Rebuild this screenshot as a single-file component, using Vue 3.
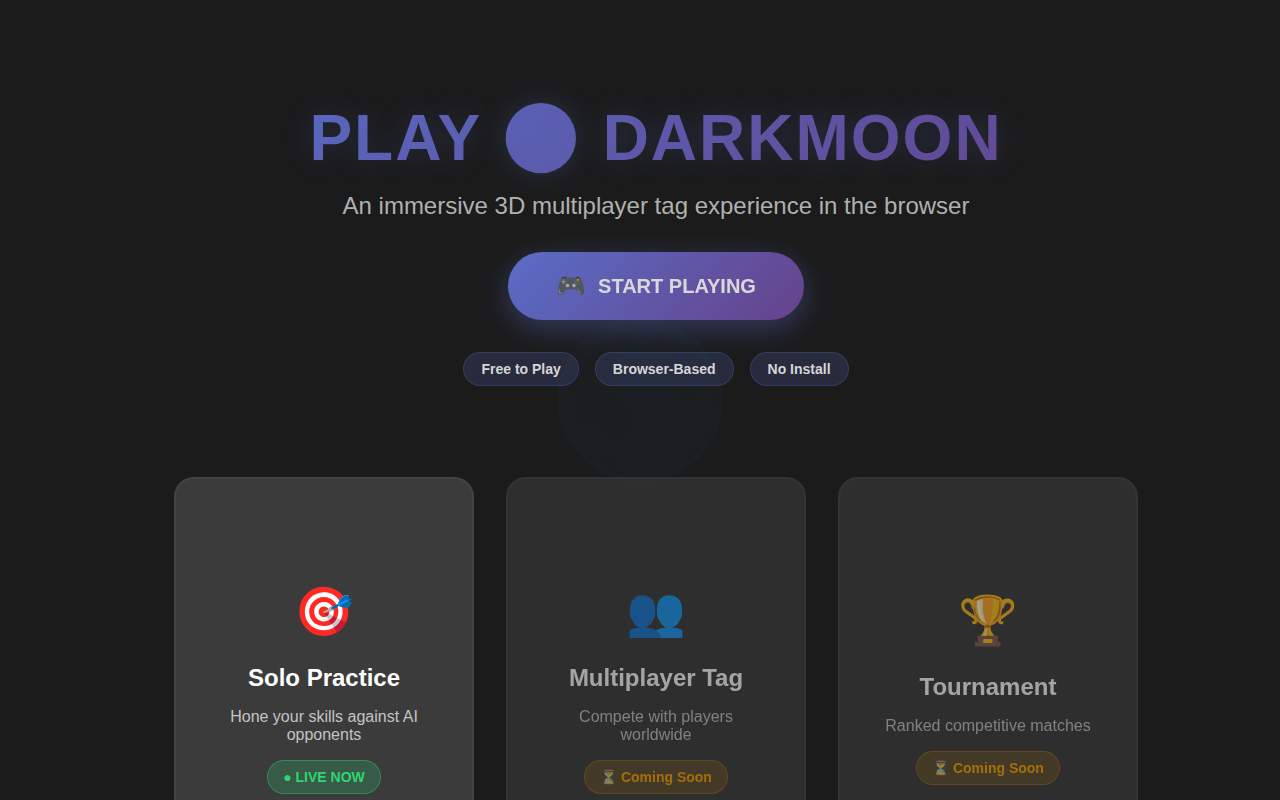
<script setup>
import { ref } from "vue";

const tags = ["Free to Play", "Browser-Based", "No Install"];

const modes = ref([
	{ id: "solo", icon: "🎯", title: "Solo Practice", text: "Hone your skills against AI opponents", status: "● LIVE NOW", live: true },
	{ id: "tag", icon: "👥", title: "Multiplayer Tag", text: "Compete with players worldwide", status: "⏳ Coming Soon", live: false },
	{ id: "tournament", icon: "🏆", title: "Tournament", text: "Ranked competitive matches", status: "⏳ Coming Soon", live: false },
]);
</script>

<template>
	<div class="home">
		<div class="moon-backdrop" aria-hidden="true"></div>
		<main class="content">
			<header class="hero">
				<h1 class="title">PLAY 🌑 DARKMOON</h1>
				<p class="subtitle">An immersive 3D multiplayer tag experience in the browser</p>
				<button type="button" class="play-button"><span class="play-icon">🎮</span><span>START PLAYING</span></button>
				<div class="tags">
					<span v-for="tag in tags" :key="tag" class="tag">{{ tag }}</span>
				</div>
			</header>
			<section class="modes">
				<button v-for="mode in modes" :key="mode.id" type="button" class="mode" :class="{ live: mode.live }" :disabled="!mode.live">
					<span class="mode-icon">{{ mode.icon }}</span>
					<span class="mode-title">{{ mode.title }}</span>
					<span class="mode-text">{{ mode.text }}</span>
					<span class="status">{{ mode.status }}</span>
				</button>
			</section>
		</main>
	</div>
</template>

<style>
body {
	background: #1a1a1a;
}
</style>

<style scoped>
.home {
	position: relative;
	height: 100vh;
	overflow: hidden;
	background: #1b1b1b;
	color: #ffffff;
	font-family: "Liberation Sans", Arial, sans-serif;
}

.moon-backdrop {
	position: absolute;
	inset: 0;
	display: flex;
	align-items: center;
	justify-content: center;
	font-size: 150px;
	opacity: 0.13;
}

.moon-backdrop::before {
	content: "🌑";
}

.content {
	position: relative;
	max-width: 964px;
	margin: 0 auto;
	padding: 96px 0 0 32px;
}

.hero {
	display: flex;
	flex-direction: column;
	align-items: center;
	text-align: center;
}

.title {
	align-self: stretch;
	margin: 0;
	font-size: 64px;
	line-height: 84px;
	letter-spacing: 2px;
	background: linear-gradient(135deg, #667eea 0%, #764ba2 100%);
	background-clip: text;
	-webkit-background-clip: text;
	color: transparent;
	text-shadow: 0 0 30px rgba(92, 116, 210, 0.3);
	opacity: 0.83;
}

.subtitle {
	margin: 12px 0 32px;
	font-size: 24px;
	line-height: 28px;
	color: #b0b0b0;
}

.play-button {
	display: flex;
	align-items: center;
	gap: 12px;
	height: 68px;
	padding: 0 48px;
	border: 0;
	border-radius: 50px;
	background: linear-gradient(135deg, #667eea, #764ba2);
	box-shadow: 0 8px 30px rgba(102, 126, 234, 0.4);
	color: #ffffff;
	font: bold 20px "Liberation Sans", Arial, sans-serif;
	opacity: 0.83;
}

.play-icon {
	font-size: 24px;
}

.tags {
	display: flex;
	gap: 16px;
	margin-top: 32px;
}

.tag {
	padding: 8px 17px;
	border: 1px solid rgba(102, 126, 234, 0.22);
	border-radius: 20px;
	background: rgba(102, 126, 234, 0.17);
	color: #d6d6d8;
	font-size: 14px;
	line-height: 16px;
	font-weight: bold;
}

.modes {
	display: grid;
	grid-template-columns: repeat(3, 1fr);
	gap: 32px;
	margin-top: 91px;
}

.mode {
	display: flex;
	flex-direction: column;
	align-items: center;
	justify-content: center;
	min-height: 422px;
	padding: 40px;
	border: 2px solid #434343;
	border-radius: 20px;
	background: #3b3b3b;
	color: #ffffff;
	font: 16px "Liberation Sans", Arial, sans-serif;
	opacity: 0.6;
}

.mode.live {
	opacity: 1;
}

.mode-icon {
	margin-bottom: 24px;
	font-size: 48px;
}

.mode-title {
	margin-bottom: 16px;
	font-size: 24px;
	line-height: 28px;
	font-weight: bold;
}

.mode-text {
	margin-bottom: 16px;
	color: #c4c4c4;
	line-height: 18px;
}

.status {
	padding: 8px 15px;
	border: 1px solid rgba(255, 165, 0, 0.3);
	border-radius: 20px;
	background: rgba(255, 165, 0, 0.18);
	color: #ffa500;
	font-size: 14px;
	line-height: 16px;
	font-weight: bold;
}

.live .status {
	border-color: rgba(46, 204, 113, 0.4);
	background: rgba(46, 204, 113, 0.22);
	color: #2ed573;
}
</style>
